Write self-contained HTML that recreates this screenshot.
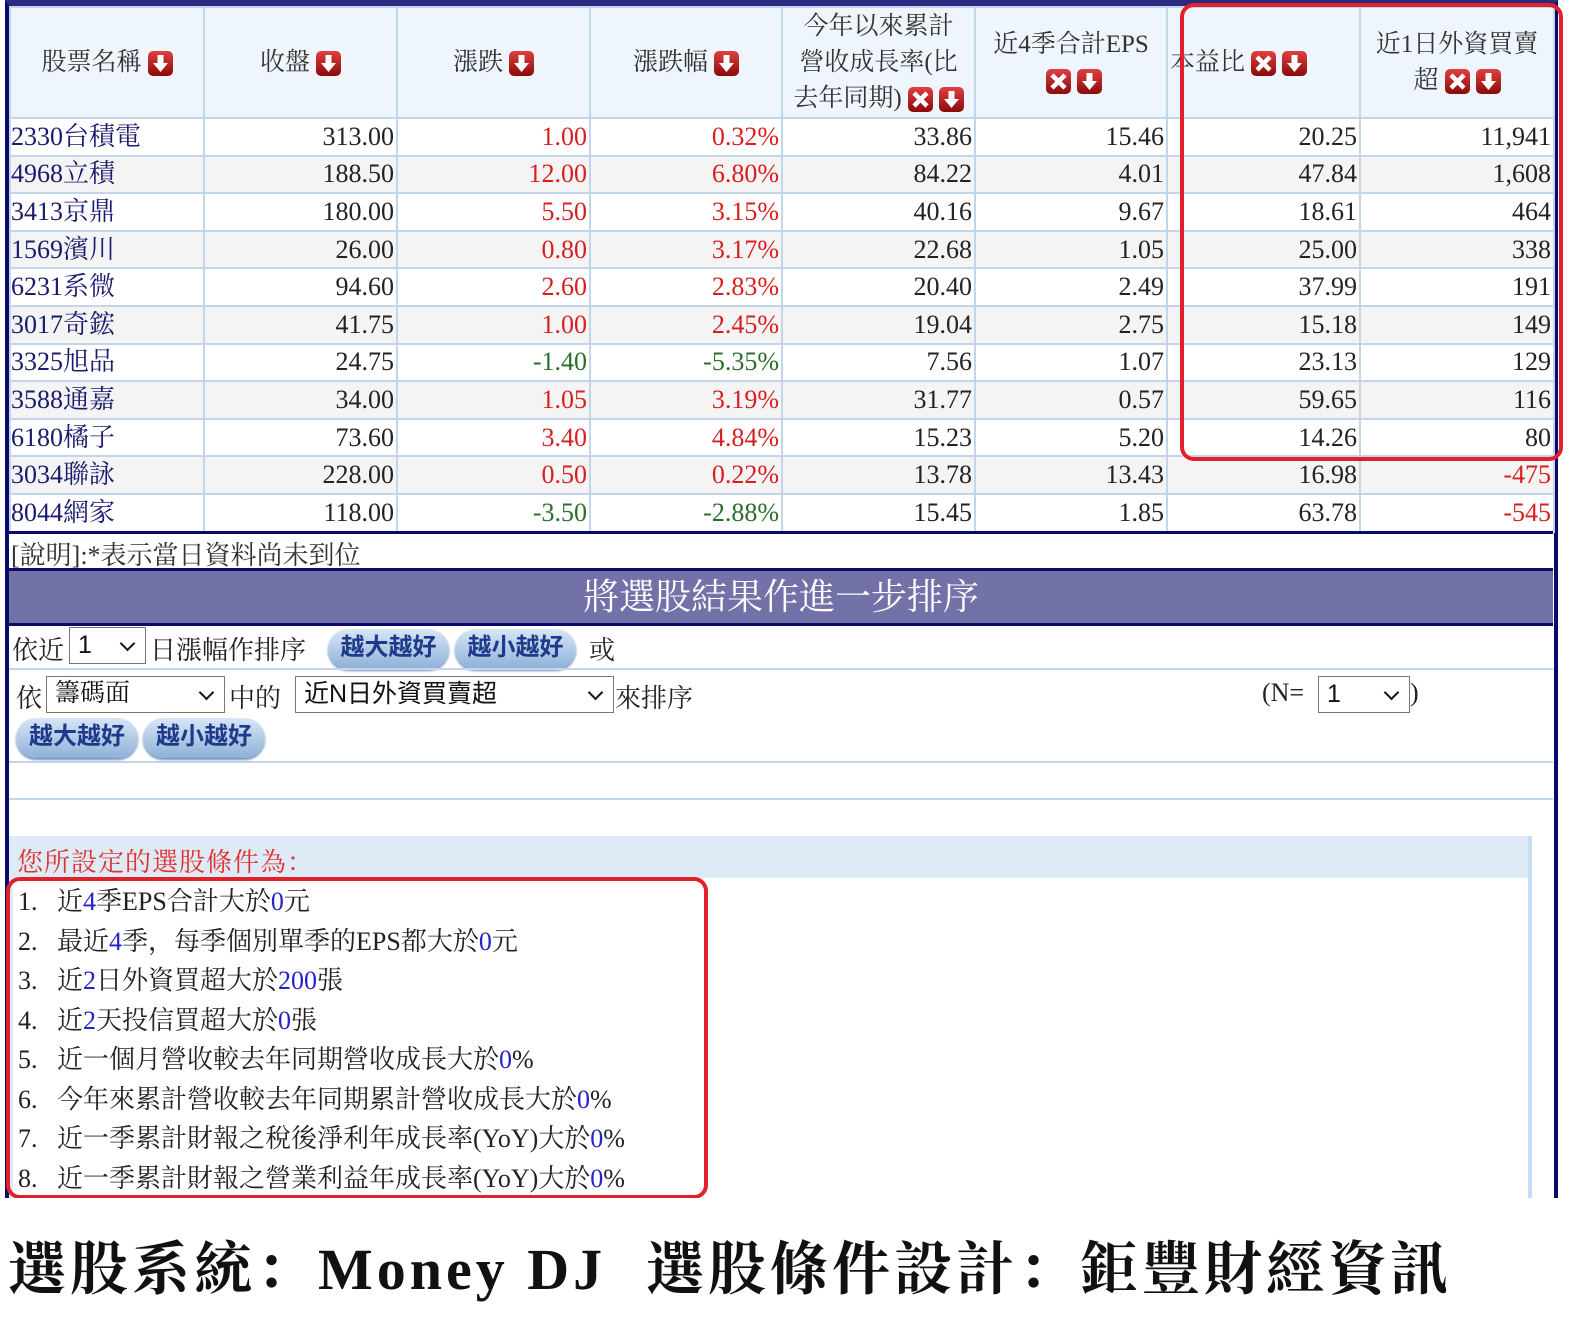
<!DOCTYPE html>
<html><head><meta charset="utf-8"><style>
*{margin:0;padding:0;box-sizing:border-box}
body{width:1587px;height:1333px;background:#fff;position:relative;overflow:hidden;font-family:"Liberation Serif","Noto Serif CJK SC",serif;color:#222}
.frame{position:absolute;left:5px;top:0;width:1553px;height:1198px;border-left:4px solid #0a0a6a;border-right:4px solid #0a0a6a;border-top:6px solid #2a2a80}
table{position:absolute;left:9px;top:6px;width:1544px;border-collapse:collapse;table-layout:fixed}
td,th{border:2px solid #c3d5e8;font-size:26px;font-weight:normal;white-space:nowrap;overflow:hidden}
th{background:#eef5fc;height:111px;color:#333;line-height:36px;white-space:normal;font-size:25px;padding:0 8px}
td{height:37.6px;text-align:right;padding:0 2px;line-height:34px}
tr.d{height:37.6px}
td.n{text-align:left;color:#1a1a6e;padding:0}
tr:nth-child(odd) td{background:#f4f4f4}
.r{color:#d81e1e}.g{color:#2a6e2a}
.ic{display:inline-block;width:25px;height:25px;vertical-align:-6px;margin-left:6px}
.box{position:absolute;border:4px solid #e0202c;border-radius:14px}
.ln{position:absolute;left:9px;width:1544px;height:2px;background:#c3d5e8}
.sel{position:absolute;border:1px solid #777;background:#fff;height:37px;font-family:"Liberation Sans","Noto Sans CJK SC",sans-serif;font-size:25px;padding-left:8px;line-height:34px;color:#111}
.sel:after{content:"";position:absolute;right:12px;top:10px;width:9px;height:9px;border-right:2px solid #111;border-bottom:2px solid #111;transform:rotate(45deg)}
.btn{position:absolute;height:40px;border-radius:20px;background:linear-gradient(#d8e6f6,#8fb0d8);color:#1e3a8a;font-size:24px;font-weight:bold;text-align:center;line-height:38px;box-shadow:0 2px 2px #7090c0;font-family:"Liberation Sans","Noto Sans CJK SC",sans-serif}
.t{position:absolute;font-size:26px;white-space:nowrap;color:#222}
.b{color:#2222cc}
</style></head><body>
<div class="frame"></div>
<svg width="0" height="0" style="position:absolute"><defs>
<linearGradient id="rg" x1="0" y1="0" x2="0" y2="1"><stop offset="0" stop-color="#e04040"/><stop offset="1" stop-color="#8a0a0a"/></linearGradient>
<symbol id="dn" viewBox="0 0 25 25"><rect x="0" y="0" width="25" height="25" rx="5" fill="url(#rg)"/><path d="M9.5 4h6v8h4.5l-7.5 9-7.5-9h4.5z" fill="#fff"/></symbol>
<symbol id="xx" viewBox="0 0 25 25"><rect x="0" y="0" width="25" height="25" rx="5" fill="url(#rg)"/><path d="M6 6l13 13M19 6L6 19" stroke="#fff" stroke-width="4.5"/></symbol>
</defs></svg>
<table>
<colgroup><col style="width:194px"><col style="width:193px"><col style="width:193px"><col style="width:192px"><col style="width:193px"><col style="width:192px"><col style="width:193px"><col style="width:194px"></colgroup>
<tr>
<th>股票名稱<svg class="ic"><use href="#dn"/></svg></th>
<th>收盤<svg class="ic"><use href="#dn"/></svg></th>
<th>漲跌<svg class="ic"><use href="#dn"/></svg></th>
<th>漲跌幅<svg class="ic"><use href="#dn"/></svg></th>
<th style="padding:0 4px">今年以來累計<br>營收成長率(比<br>去年同期)<svg class="ic"><use href="#xx"/></svg><svg class="ic"><use href="#dn"/></svg></th>
<th>近4季合計EPS<br><svg class="ic"><use href="#xx"/></svg><svg class="ic"><use href="#dn"/></svg></th>
<th style="text-align:left;padding:0 2px">本益比<svg class="ic"><use href="#xx"/></svg><svg class="ic"><use href="#dn"/></svg></th>
<th>近1日外資買賣<br>超<svg class="ic"><use href="#xx"/></svg><svg class="ic"><use href="#dn"/></svg></th>
</tr>
<tr class="d"><td class="n">2330台積電</td><td>313.00</td><td class="r">1.00</td><td class="r">0.32%</td><td>33.86</td><td>15.46</td><td>20.25</td><td>11,941</td></tr>
<tr class="d"><td class="n">4968立積</td><td>188.50</td><td class="r">12.00</td><td class="r">6.80%</td><td>84.22</td><td>4.01</td><td>47.84</td><td>1,608</td></tr>
<tr class="d"><td class="n">3413京鼎</td><td>180.00</td><td class="r">5.50</td><td class="r">3.15%</td><td>40.16</td><td>9.67</td><td>18.61</td><td>464</td></tr>
<tr class="d"><td class="n">1569濱川</td><td>26.00</td><td class="r">0.80</td><td class="r">3.17%</td><td>22.68</td><td>1.05</td><td>25.00</td><td>338</td></tr>
<tr class="d"><td class="n">6231系微</td><td>94.60</td><td class="r">2.60</td><td class="r">2.83%</td><td>20.40</td><td>2.49</td><td>37.99</td><td>191</td></tr>
<tr class="d"><td class="n">3017奇鋐</td><td>41.75</td><td class="r">1.00</td><td class="r">2.45%</td><td>19.04</td><td>2.75</td><td>15.18</td><td>149</td></tr>
<tr class="d"><td class="n">3325旭品</td><td>24.75</td><td class="g">-1.40</td><td class="g">-5.35%</td><td>7.56</td><td>1.07</td><td>23.13</td><td>129</td></tr>
<tr class="d"><td class="n">3588通嘉</td><td>34.00</td><td class="r">1.05</td><td class="r">3.19%</td><td>31.77</td><td>0.57</td><td>59.65</td><td>116</td></tr>
<tr class="d"><td class="n">6180橘子</td><td>73.60</td><td class="r">3.40</td><td class="r">4.84%</td><td>15.23</td><td>5.20</td><td>14.26</td><td>80</td></tr>
<tr class="d"><td class="n">3034聯詠</td><td>228.00</td><td class="r">0.50</td><td class="r">0.22%</td><td>13.78</td><td>13.43</td><td>16.98</td><td class="r">-475</td></tr>
<tr class="d"><td class="n">8044網家</td><td>118.00</td><td class="g">-3.50</td><td class="g">-2.88%</td><td>15.45</td><td>1.85</td><td>63.78</td><td class="r">-545</td></tr>
</table>
<div style="position:absolute;left:9px;top:531px;width:1544px;height:3px;background:#0a0a6a"></div>
<div class="t" style="left:11px;top:535px;color:#333">[說明]:*表示當日資料尚未到位</div>
<div style="position:absolute;left:9px;top:568px;width:1544px;height:58px;background:#7272a8;border-top:3px solid #0a0a6a;border-bottom:3px solid #0a0a6a;color:#fff;font-size:36px;text-align:center;line-height:52px">將選股結果作進一步排序</div>
<div class="t" style="left:12px;top:630px">依近</div>
<div class="sel" style="left:69px;top:627px;width:77px">1</div>
<div class="t" style="left:150px;top:630px">日漲幅作排序</div>
<div class="btn" style="left:328px;top:629px;width:121px">越大越好</div>
<div class="btn" style="left:455px;top:629px;width:121px">越小越好</div>
<div class="t" style="left:589px;top:630px">或</div>
<div class="ln" style="top:668px"></div>
<div class="t" style="left:16px;top:678px">依</div>
<div class="sel" style="left:46px;top:676px;width:179px;font-family:'Liberation Serif','Noto Serif CJK SC',serif">籌碼面</div>
<div class="t" style="left:229px;top:678px">中的</div>
<div class="sel" style="left:295px;top:676px;width:319px">近N日外資買賣超</div>
<div class="t" style="left:615px;top:678px">來排序</div>
<div class="t" style="left:1262px;top:678px">(N=</div>
<div class="sel" style="left:1318px;top:676px;width:92px">1</div>
<div class="t" style="left:1410px;top:678px">)</div>
<div class="btn" style="left:16px;top:718px;width:122px">越大越好</div>
<div class="btn" style="left:143px;top:718px;width:122px">越小越好</div>
<div class="ln" style="top:761px"></div>
<div class="ln" style="top:798px"></div>
<div style="position:absolute;left:9px;top:836px;width:1523px;height:362px;background:#deebf6;border-right:4px solid #c6dcf2"></div>
<div style="position:absolute;left:13px;top:878px;width:1515px;height:320px;background:#fff"></div>
<div class="t" style="left:17px;top:842px;color:#e03030;letter-spacing:1px">您所設定的選股條件為：</div>
<div class="t" style="left:18px;top:882px;line-height:39.5px">
1.&nbsp;&nbsp;&nbsp;近<span class="b">4</span>季EPS合計大於<span class="b">0</span>元<br>
2.&nbsp;&nbsp;&nbsp;最近<span class="b">4</span>季，每季個別單季的EPS都大於<span class="b">0</span>元<br>
3.&nbsp;&nbsp;&nbsp;近<span class="b">2</span>日外資買超大於<span class="b">200</span>張<br>
4.&nbsp;&nbsp;&nbsp;近<span class="b">2</span>天投信買超大於<span class="b">0</span>張<br>
5.&nbsp;&nbsp;&nbsp;近一個月營收較去年同期營收成長大於<span class="b">0</span>%<br>
6.&nbsp;&nbsp;&nbsp;今年來累計營收較去年同期累計營收成長大於<span class="b">0</span>%<br>
7.&nbsp;&nbsp;&nbsp;近一季累計財報之稅後淨利年成長率(YoY)大於<span class="b">0</span>%<br>
8.&nbsp;&nbsp;&nbsp;近一季累計財報之營業利益年成長率(YoY)大於<span class="b">0</span>%</div>
<div class="box" style="left:1180px;top:3px;width:383px;height:458px"></div>
<div class="box" style="left:6px;top:877px;width:702px;height:322px"></div>
<div style="position:absolute;left:0;top:1198px;width:1587px;height:135px;background:#fff"></div>
<div class="t" style="left:8px;top:1222px;font-size:58px;font-weight:bold;color:#111;letter-spacing:4px">選股系統：Money DJ</div>
<div class="t" style="left:646px;top:1222px;font-size:58px;font-weight:bold;color:#111;letter-spacing:4px">選股條件設計：鉅豐財經資訊</div>
</body></html>
